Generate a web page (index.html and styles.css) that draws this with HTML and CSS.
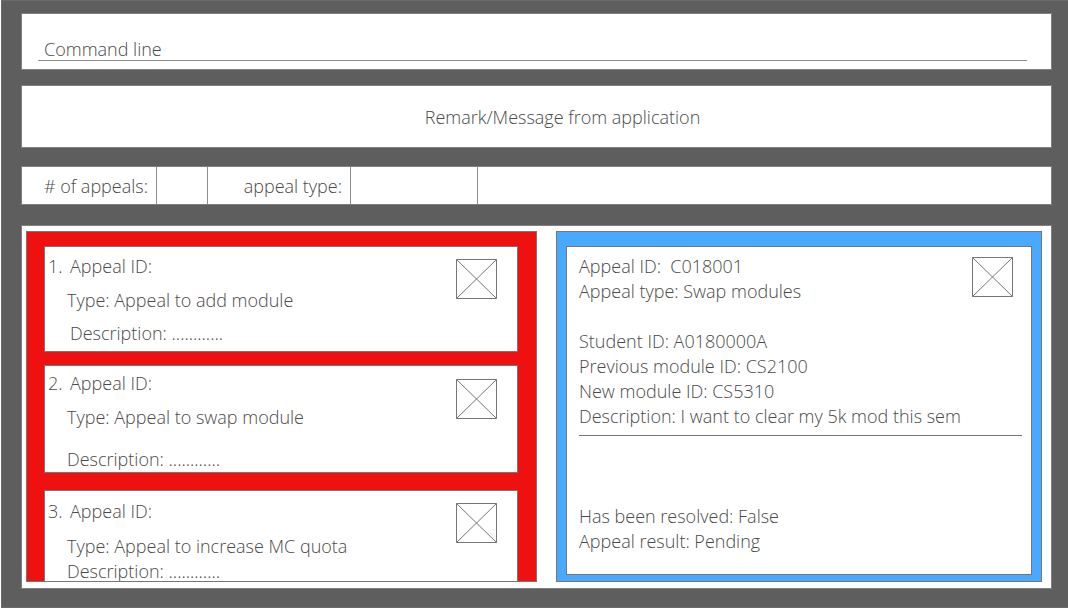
FILE: index.html
```html
<!DOCTYPE html>
<html lang="en">
<head>
<meta charset="utf-8">
<title>Appeals</title>
<link rel="stylesheet" href="styles.css">
</head>
<body>
<svg class="sprite" aria-hidden="true">
  <symbol id="cross-box" viewBox="0 0 41 40">
    <path d="M.5.5h40v39H.5zM.5.5l40 39M40.5.5l-40 39" fill="none" stroke="#767676" stroke-width="1"/>
  </symbol>
</svg>
<div class="app">
  <form class="box command">
    <input class="command-input" type="text" value="Command line" aria-label="Command line">
  </form>
  <p class="box message">Remark/Message from application</p>
  <dl class="box status">
    <dt class="status-label count-label">#&nbsp;of appeals:</dt>
    <dd class="status-value count-value"></dd>
    <dt class="status-label type-label">appeal type:</dt>
    <dd class="status-value type-value"></dd>
  </dl>
  <main class="box content">
    <ol class="list">
      <li class="card">
        <div class="card-text">
          <h2 class="card-title"><span class="card-number">1.</span>Appeal ID:</h2>
          <p class="line">Type: Appeal to add module</p>
          <p class="line line-inset">Description: ............</p>
        </div>
        <svg class="icon"><use href="#cross-box"/></svg>
      </li>
      <li class="card card-tall">
        <div class="card-text">
          <h2 class="card-title"><span class="card-number">2.</span>Appeal ID:</h2>
          <p class="line">Type: Appeal to swap module</p>
          <p class="line">Description: ............</p>
        </div>
        <svg class="icon"><use href="#cross-box"/></svg>
      </li>
      <li class="card card-last">
        <div class="card-text">
          <h2 class="card-title"><span class="card-number">3.</span>Appeal ID:</h2>
          <p class="line">Type: Appeal to increase MC quota</p>
          <p class="line">Description: ............</p>
        </div>
        <svg class="icon"><use href="#cross-box"/></svg>
      </li>
    </ol>
    <section class="detail">
      <div class="detail-card">
        <div class="detail-top">
          <div>
            <p class="spaced">Appeal ID:  C018001</p>
            <p>Appeal type: Swap modules</p>
          </div>
          <svg class="icon"><use href="#cross-box"/></svg>
        </div>
        <div class="detail-info">
          <p>Student ID: A0180000A</p>
          <p>Previous module ID: CS2100</p>
          <p>New module ID: CS5310</p>
          <p>Description: I want to clear my 5k mod this sem</p>
        </div>
        <div class="detail-result">
          <p>Has been resolved: False</p>
          <p>Appeal result: Pending</p>
        </div>
      </div>
    </section>
  </main>
</div>
</body>
</html>
```

FILE: styles.css
```css
* { box-sizing: border-box; }

body, p, h2, dl, dd, ol { margin: 0; padding: 0; }

body {
  background: #fff;
  color: #4a4a4a;
  font-family: "Open Sans", "Noto Sans", sans-serif;
  font-size: 18px;
  font-weight: 300;
  line-height: 25px;
}

.sprite { display: none; }

.app {
  display: flex;
  flex-direction: column;
  min-height: 100vh;
  margin-left: 1px;
  padding: 12px 15px 18px 19px;
  border: 1px solid #6a6a6a;
  border-right: 0;
  padding-right: 16px;
  background: #5e5e5e;
}

.box {
  border: 1px solid #808080;
  background: #fff;
}

.command { padding: 22px 24px 8px 16px; }

.command-input {
  display: block;
  width: 100%;
  height: 25px;
  padding: 2px 6px 0;
  border: 0;
  border-bottom: 1px solid #8e8e8e;
  outline: 0;
  background: transparent;
  color: inherit;
  font: inherit;
}

.message {
  margin-top: 15px;
  padding: 19px 0 17px 52px;
  text-align: center;
}

.status {
  display: flex;
  height: 39px;
  margin-top: 18px;
  line-height: 38px;
}

.status-label, .status-value { border-right: 1px solid #8e8e8e; }
.status-label { padding-right: 8px; text-align: right; white-space: nowrap; }
.count-label { width: 135px; }
.count-value { width: 51px; }
.type-label { width: 143px; }
.type-value { width: 127px; }

.content {
  display: grid;
  flex: 1;
  grid-template-columns: 511fr 486fr;
  gap: 19px;
  margin-top: 20px;
  padding: 5px 9px 6px 4px;
}

.list {
  overflow: hidden;
  padding: 14px 18px 0 17px;
  border: 1px solid #767676;
  background: #ef1010;
  list-style: none;
}

.card {
  display: flex;
  justify-content: space-between;
  height: 106px;
  margin-bottom: 13px;
  padding: 7px 20px 0 3px;
  border: 1px solid #767676;
  background: #fff;
}

.card-text { display: flex; flex-direction: column; gap: 8px; }
.card-title { margin-bottom: 1px; font-size: inherit; font-weight: inherit; }
.card-number { display: inline-block; width: 22px; }
.line { padding-left: 19px; }
.line-inset { padding-left: 22px; }
.icon { flex: none; width: 41px; height: 40px; margin-top: 5px; }

.card-tall { height: 108px; margin-bottom: 17px; padding-top: 5px; }
.card-tall .icon { margin-top: 8px; }
.card-tall .line + .line { margin-top: 9px; }

.card-last { height: 91px; margin-bottom: 0; padding-top: 8px; border-bottom: 0; }
.card-last .card-title { margin-bottom: 2px; }
.card-last .icon { margin-top: 4px; }
.card-last .line + .line { margin-top: -8px; }

.detail {
  display: flex;
  padding: 14px 9px 6px;
  border: 1px solid #767676;
  background: #48a9ff;
}

.detail-card {
  flex: 1;
  padding: 7px 9px 19px 12px;
  border: 1px solid #767676;
  background: #fff;
}

.detail-top { display: flex; justify-content: space-between; padding-right: 9px; }
.detail-top .icon { margin-top: 3px; }
.spaced { white-space: pre; }

.detail-info {
  margin-top: 25px;
  padding-bottom: 6px;
  border-bottom: 1px solid #767676;
}

.detail-result { margin-top: 68px; }
```
